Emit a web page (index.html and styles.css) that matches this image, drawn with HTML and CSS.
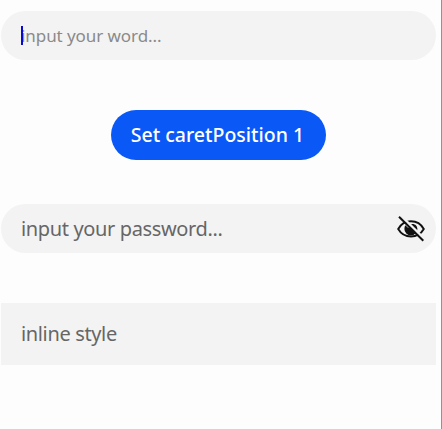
FILE: index.html
```html
<!DOCTYPE html>
<html lang="en">
<head>
<meta charset="utf-8">
<title>Text input</title>
<link rel="stylesheet" href="styles.css">
</head>
<body>
<main class="screen">
  <div class="field field-word"><span class="caret"></span><span class="hint hint-word">input your word...</span></div>
  <button class="action" type="button"><span class="action-label">Set caretPosition 1</span></button>
  <div class="field field-password">
    <span class="hint hint-password">input your password...</span>
    <svg class="eye" viewBox="0 0 28 28" width="28" height="28" aria-hidden="true">
      <path d="M1.200 14C4.200 8.500 8.600 6.200 14 6.200S23.800 8.500 26.800 14c-3 5.200-7.400 7.500-12.800 7.500S4.200 19.200 1.200 14Z" fill="none" stroke="#111" stroke-width="1.900"/>
      <path d="M8.300 10.300 11.300 13 14 9.200C18 8.500 20.400 11 20.400 14a6.500 6.500 0 0 1-13 0c0-1.500.3-2.700.9-3.700Z" fill="#111"/>
      <path d="M4.300 1.200 28 24.500" stroke="#f2f2f2" stroke-width="2.500"/>
      <path d="M2 1.700 26.300 25.800" stroke="#111" stroke-width="2"/>
    </svg>
  </div>
  <div class="field field-inline"><span class="hint hint-inline">inline style</span></div>
</main>
</body>
</html>
```
FILE: styles.css
```css
* { box-sizing: border-box; }
body {
  margin: 0;
  background: #fdfdfd;
  font-family: "Noto Sans", "Open Sans", sans-serif;
}
.screen {
  display: flex;
  flex-direction: column;
  height: 429px;
  padding: 11px 5px 0 1px;
  border-right: 1px solid #929292;
}
.field {
  position: relative;
  display: flex;
  flex: none;
  align-items: center;
  height: 49px;
  padding: 0 11px 0 20px;
  border-radius: 25px;
  background: #f3f3f3;
  color: #666;
}
.hint, .action-label { white-space: nowrap; line-height: 28px; }
.hint { font-size: 20px; letter-spacing: -0.360px; }
.field-word { color: #8a8a8a; }
.hint-word { font-size: 17px; letter-spacing: -0.070px; }
.caret {
  position: absolute;
  left: 20px;
  top: 15px;
  width: 2px;
  height: 19px;
  background: #0a0acd;
}
.action {
  display: flex;
  flex: none;
  align-items: center;
  justify-content: center;
  align-self: center;
  width: 215px;
  height: 50px;
  margin: 50px 0 44px;
  padding: 0 2px 0 0;
  border: 0;
  border-radius: 25px;
  background: #0a59f7;
  color: #fff;
  font: 500 19.500px "Noto Sans", sans-serif;
}
.eye { margin-left: auto; }
.field-inline {
  height: 62px;
  margin-top: 50px;
  border-radius: 0;
}
```
